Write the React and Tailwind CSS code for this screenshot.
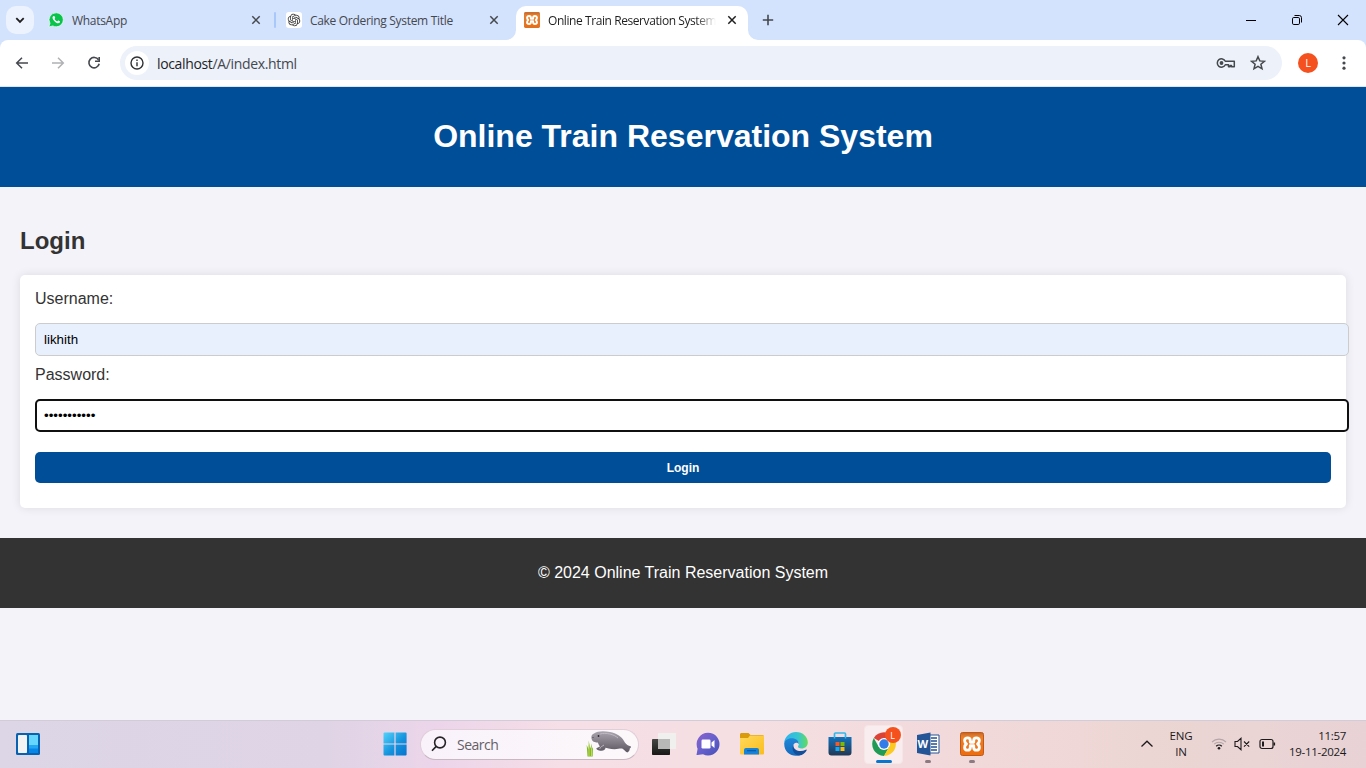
import React from "react";

const Close = ({ className = "" }) => (
  <svg className={"shrink-0 " + className} width="16" height="16" viewBox="0 0 16 16" fill="none" stroke="currentColor" strokeWidth="1.5">
    <path d="M4.300 4.300l7.400 7.400M11.700 4.300l-7.400 7.400" />
  </svg>
);

const Xampp = ({ size, id }) => (
  <svg className="shrink-0" width={size} height={size} viewBox="0 0 24 24">
    <defs>
      <linearGradient id={id} x1="0" y1="0" x2="0" y2="1">
        <stop offset="0" stopColor="#c8601c" />
        <stop offset="0.12" stopColor="#d97831" />
        <stop offset="0.2" stopColor="#ee7e24" />
        <stop offset="1" stopColor="#ee6c0c" />
      </linearGradient>
    </defs>
    <rect x="0.5" y="0.500" width="23" height="23" rx="2" fill={`url(#${id})`} stroke="#bd5a1b" />
    <path d="M10.300 10.200V8.600c0-1.700-1-2.700-2.700-2.700S4.600 7 4.600 8.600c0 1.500.8 2.600 1.800 3.400-1 .8-1.800 1.900-1.800 3.400 0 1.600 1.300 2.700 3 2.700s2.700-1 2.700-2.700v-1.600h3.400v1.600c0 1.700 1 2.700 2.700 2.700s3-1.100 3-2.700c0-1.500-.8-2.600-1.800-3.400 1-.8 1.800-1.900 1.800-3.400 0-1.600-1.300-2.700-3-2.700s-2.700 1-2.700 2.700v1.600z" fill="none" stroke="#fff" strokeWidth="2.900" strokeLinejoin="round" />
  </svg>
);

const WhatsApp = () => (
  <svg className="shrink-0" width="16" height="16" viewBox="0 0 16 16">
    <path d="M8.300.8a7 7 0 0 1 0 14 7.200 7.200 0 0 1-3.500-.9L.8 15l1.200-3.700A7 7 0 0 1 8.300.8z" fill="#08c44b" stroke="#f4fff8" strokeWidth=".7" />
    <path d="M5.300 4.200c.4-.4 1-.4 1.200 0l.7 1.500c.1.3-.5.9-.6 1.200.5 1.100 1.500 1.900 2.600 2.400.4-.2.8-1 1.200-.9l1.500.8c.5.5-.2 1.600-.9 1.900-1 .4-2.600-.2-3.800-1.200C5.700 8.700 4.400 7 4.500 5.600c0-.6.4-1.100.8-1.400z" fill="#fff" />
  </svg>
);

const OpenAI = () => (
  <svg className="shrink-0" width="16" height="16" viewBox="0 0 24 24">
    <rect width="24" height="24" rx="4" fill="#fff" />
    <path transform="translate(2.600 2.600) scale(.783)" fill="#333" d="M22.28 9.82a5.98 5.98 0 0 0-.52-4.91 6.05 6.05 0 0 0-6.51-2.9A6.07 6.07 0 0 0 4.98 4.18a5.98 5.98 0 0 0-4 2.9 6.05 6.05 0 0 0 .74 7.1 5.98 5.98 0 0 0 .51 4.91 6.05 6.05 0 0 0 6.51 2.9A5.98 5.98 0 0 0 13.26 24a6.06 6.06 0 0 0 5.77-4.21 5.99 5.99 0 0 0 4-2.9 6.06 6.06 0 0 0-.75-7.07zm-9.02 12.61a4.48 4.48 0 0 1-2.88-1.04l.14-.08 4.78-2.76a.8.8 0 0 0 .39-.68v-6.74l2.02 1.17a.07.07 0 0 1 .04.05v5.58a4.5 4.5 0 0 1-4.49 4.5zM3.6 18.3a4.47 4.47 0 0 1-.54-3.01l.14.09 4.78 2.76a.77.77 0 0 0 .78 0l5.84-3.37v2.33a.08.08 0 0 1-.03.06L9.74 19.95a4.5 4.5 0 0 1-6.14-1.65zM2.34 7.9a4.49 4.49 0 0 1 2.37-1.98V11.6a.77.77 0 0 0 .39.68l5.81 3.35-2.02 1.17a.08.08 0 0 1-.07 0L4 14A4.5 4.5 0 0 1 2.34 7.87zm16.6 3.86-5.84-3.39L15.12 7.2a.08.08 0 0 1 .07 0l4.83 2.79a4.49 4.49 0 0 1-.68 8.1v-5.67a.79.79 0 0 0-.4-.66zm2-3.02-.14-.09-4.77-2.78a.78.78 0 0 0-.79 0L9.41 9.23V6.9a.07.07 0 0 1 .03-.06l4.83-2.79a4.5 4.5 0 0 1 6.68 4.66zM8.31 12.86l-2.02-1.16a.08.08 0 0 1-.04-.06V6.07a4.5 4.5 0 0 1 7.38-3.45l-.14.08L8.7 5.46a.8.8 0 0 0-.39.68zm1.1-2.37L12 9l2.6 1.5v3L12 15l-2.6-1.5z" />
  </svg>
);

function TabStrip() {
  return (
    <div className="flex h-10 bg-[#d3e2fd] text-[#45484d]">
      <div className="flex flex-1 items-center pl-1.5">
        <button className="flex h-7 w-7 items-center justify-center rounded-[10px] bg-[#ecf2fe] text-[#1f1f1f]">
          <svg width="10" height="10" viewBox="0 0 10 10" fill="none" stroke="currentColor" strokeWidth="1.800"><path d="M1.300 3.200L5 6.900l3.700-3.700" /></svg>
        </button>
        <div className="ml-3.5 flex w-[216px] items-center">
          <WhatsApp />
          <span className="ml-2 flex-1 pt-0.5 text-[12px] tracking-[-0.3px]">WhatsApp</span>
          <Close />
        </div>
        <div className="ml-2.5 h-4 w-0.5 rounded bg-[#a8c7fa]" />
        <div className="ml-2.5 flex w-[216px] items-center">
          <OpenAI />
          <span className="ml-2 flex-1 whitespace-nowrap pt-0.5 text-[12px] tracking-[-0.31px]">Cake Ordering System Title</span>
          <Close />
        </div>
        <div className="relative ml-3.5 mt-1.5 flex h-[34px] w-[232px] items-center rounded-t-[10px] bg-white px-2 pb-1.5 text-[#1f1f1f]">
          <svg className="absolute bottom-0 -left-2.5" width="10" height="10"><path d="M10 0v10H0A10 10 0 0 0 10 0z" fill="#fff" /></svg>
          <svg className="absolute bottom-0 -right-2.5" width="10" height="10"><path d="M0 0v10h10A10 10 0 0 1 0 0z" fill="#fff" /></svg>
          <Xampp size={16} id="xa" />
          <span className="ml-2 w-[168px] overflow-hidden whitespace-nowrap pt-0.5 text-[12px] tracking-[-0.42px] [mask-image:linear-gradient(to_right,black_88%,transparent)]">Online Train Reservation System</span>
          <Close className="ml-2" />
        </div>
        <svg className="ml-3" width="16" height="16" viewBox="0 0 16 16" stroke="#45484d" strokeWidth="1.600"><path d="M8 2.800v10.400M2.800 8h10.400" /></svg>
      </div>
      <div className="flex items-center text-black">
        <div className="flex w-[46px] justify-center"><svg width="12" height="12"><path d="M1 6.500h10" stroke="currentColor" /></svg></div>
        <div className="flex w-[46px] justify-center">
          <svg width="12" height="12" viewBox="0 0 12 12" fill="none" stroke="currentColor"><rect x="1.500" y="3.500" width="7" height="7" rx="1.300" /><path d="M3.500 1.500h4.800a2.200 2.200 0 0 1 2.200 2.200v4.800" /></svg>
        </div>
        <div className="flex w-[46px] justify-center"><svg width="12" height="12" stroke="currentColor" strokeWidth="1.100"><path d="M1 1l10 10M11 1L1 11" /></svg></div>
      </div>
    </div>
  );
}

function Toolbar() {
  return (
    <div className="bg-[#d3e2fd]">
      <div className="flex h-[47px] items-center rounded-t-lg border-b border-[#dfe5ee] bg-white pl-3.5 text-[#45484d]">
        <svg width="16" height="16" viewBox="0 0 16 16" fill="none" stroke="currentColor" strokeWidth="1.500"><path d="M14 8H3M8 2.700L2.700 8 8 13.300" /></svg>
        <svg className="ml-5 text-[#b0b1b3]" width="16" height="16" viewBox="0 0 16 16" fill="none" stroke="currentColor" strokeWidth="1.500"><path d="M2 8h11M8 2.700L13.300 8 8 13.300" /></svg>
        <svg className="ml-5" width="16" height="16" viewBox="0 0 16 16" fill="none" stroke="currentColor" strokeWidth="1.600"><path d="M12.500 4.800A5.200 5.200 0 1 0 13.200 8.800" /><path d="M13.200 2v4.200H9" /></svg>
        <div className="ml-[18px] flex h-[34px] w-[1162px] items-center rounded-full bg-[#ecf1fa] pl-[5px] pr-4">
          <div className="flex h-6 w-6 items-center justify-center rounded-full bg-white">
            <svg width="14" height="14" viewBox="0 0 14 14" fill="none" stroke="#303134" strokeWidth="1.400"><circle cx="7" cy="7" r="6" /><path d="M7 6.200v4M7 3.500v1.500" /></svg>
          </div>
          <span className="ml-2 flex-1 text-[14px] tracking-[-0.35px]"><span className="text-[#1f1f1f]">localhost</span>/A/index.html</span>
          <svg width="20" height="16" viewBox="0 0 20 16" fill="none" stroke="currentColor" strokeWidth="1.500"><path d="M9.300 6.200a4.200 4.200 0 1 0 0 3.600h3.200v2h1.600v-1.400h1.400v1.400h2.800V6.200z" strokeLinejoin="round" /><circle cx="5.500" cy="8" r="1.900" fill="currentColor" stroke="none" /></svg>
          <svg className="ml-3.5" width="16" height="16" viewBox="0 0 16 16" fill="none" stroke="currentColor" strokeWidth="1.500"><path d="M8 1.700l1.800 4.200 4.600.4-3.500 3 1.100 4.500L8 11.400l-4 2.400 1.100-4.500-3.500-3 4.600-.4z" /></svg>
        </div>
        <div className="ml-4 flex h-5 w-5 items-center justify-center rounded-full bg-[#f4511e] text-[11px] text-white">L</div>
        <svg className="ml-[18px]" width="16" height="16" fill="currentColor"><circle cx="8" cy="2.800" r="1.600" /><circle cx="8" cy="8" r="1.600" /><circle cx="8" cy="13.200" r="1.600" /></svg>
      </div>
    </div>
  );
}

function Page() {
  return (
    <div className="flex-1 bg-[#f4f3f9] font-['Liberation_Sans',Arial,sans-serif] text-[#333]">
      <header className="flex h-[100px] items-center justify-center bg-[#004e98] pb-0.5">
        <h1 className="text-[32px] leading-9 font-bold text-white">Online Train Reservation System</h1>
      </header>
      <main className="px-5 pt-10 pb-[30px]">
        <h2 className="mb-5 text-[24px] leading-7 font-bold">Login</h2>
        <form className="flex h-[233px] flex-col rounded-[5px] bg-white px-[15px] pt-[15px] shadow-[0_0_10px_rgba(0,0,0,0.1)]">
          <label className="h-[18px] text-[16px] leading-[18px]">Username:</label>
          <input readOnly defaultValue="likhith" className="mt-[15px] h-[33px] w-[1314px] rounded-[5px] border border-[#ccc] bg-[#e8f0fe] px-2 text-[13.333px] text-black outline-none" />
          <label className="mt-2.5 h-[18px] text-[16px] leading-[18px]">Password:</label>
          <input readOnly type="password" defaultValue="password123" className="mt-[15px] h-[33px] w-[1314px] rounded-[5px] border-2 border-[#101010] bg-white px-[7px] text-[13.333px] text-black outline-none" />
          <button type="button" className="mt-5 h-[31px] w-full rounded-[5px] bg-[#004e98] text-[12px] font-bold text-white">Login</button>
        </form>
      </main>
      <footer className="flex h-[70px] items-center justify-center bg-[#333] text-[16px] leading-[18px] text-white">© 2024 Online Train Reservation System</footer>
    </div>
  );
}

const Slot = ({ children }) => <div className="relative flex h-12 w-11 shrink-0 items-center justify-center">{children}</div>;

const Manatee = () => (
  <svg width="48" height="28" viewBox="0 0 48 28">
    <defs><linearGradient id="man" x1="0" y1="0" x2="0" y2="1"><stop stopColor="#aaa5ae" /><stop offset=".55" stopColor="#807a85" /><stop offset="1" stopColor="#5b5560" /></linearGradient></defs>
    <path d="M1.500 26.500L.7 15l2 4.500V10.500l1.500 8 1.700-5-.3 6 1.400-2.500-.3 9.500z" fill="#83b82c" />
    <path d="M3 26V15M5.500 26v-7" stroke="#c5dd5c" strokeWidth=".9" />
    <path d="M5.500 8.500C5 6 6 4.200 8 3.500 11.500.8 18 .7 24 2c6.500 1.200 11.500 4.500 14 9 1 2.200 2.700 3.800 5 4.800 2.500.4 2.800 1.500.8 2.700 0 1.800-1 3.400-2.500 4-2-.8-2.700-2.500-4.700-3.800-1.800-.6-4.600.5-8 .5-4.600 0-8-1.200-9.200-1.400.4 1.500-1.500 3-4 3-2.800.1-5.300-1.300-5-2.500l3.500-1.800c-1-1.400-1.500-2.800-2.100-4.100C9.700 12.500 6 12 5.500 8.500z" fill="url(#man)" />
    <path d="M18 15c-2 1.300-3.500 1.800-4.300 3.900M14 4c6-1.700 14 .3 18 4" stroke="#c2bdc5" strokeWidth=".9" fill="none" />
    <circle cx="12.500" cy="6" r=".9" fill="#29242d" /><circle cx="7" cy="7.500" r=".6" fill="#433c47" />
  </svg>
);

function Taskbar() {
  return (
    <div className="flex h-12 items-center border-t border-[#d3cbd8] bg-[linear-gradient(90deg,#dcd6e7_0%,#dfd4e5_24%,#ecd5ea_32%,#f6dfe6_41%,#f6dfe2_55%,#f1d9da_72%,#ecd6d3_84%,#e8d2d5_100%)] pb-px pl-1.5 text-[#1c1a1c]">
      <Slot>
        <svg width="24" height="22" viewBox="0 0 24 22"><rect width="24" height="22" rx="1.500" fill="#0862b2" /><rect x="2" y="2" width="9" height="18" rx=".8" fill="#f3f3f3" /><rect x="13" y="2" width="9" height="10.500" fill="#67d6ff" /><path d="M13 12h9v4h-9z" fill="#24a7f2" /><path d="M13 15.500h9V20h-9z" fill="#0786e9" /></svg>
      </Slot>
      <div className="w-[323px] shrink-0" />
      <Slot>
        <svg width="24" height="24" viewBox="0 0 24 24"><defs><linearGradient id="win" x1="0" y1="0" x2="1" y2="1"><stop stopColor="#54d3fb" /><stop offset=".55" stopColor="#1593dd" /><stop offset="1" stopColor="#0673ce" /></linearGradient></defs><path d="M1.500.5h9.900v11H.5v-10a1 1 0 0 1 1-1zm11.100 0h10a1 1 0 0 1 1 1v10h-11zM.5 12.600h10.900v11H1.500a1 1 0 0 1-1-1zm12.100 0h11v10a1 1 0 0 1-1 1h-10z" fill="url(#win)" /></svg>
      </Slot>
      <div className="ml-[3px] flex h-[31px] w-[219px] shrink-0 items-center rounded-full border border-[#e1ced9] border-b-[#c8b8c1] bg-[linear-gradient(90deg,#f9f2fb,#fcf8fa)] pl-2.5 pr-1">
        <svg width="16" height="16" viewBox="0 0 16 16" fill="none" stroke="#252325" strokeWidth="1.600"><circle cx="9" cy="6.500" r="5.400" /><path d="M5.200 10.400L1 14.800" /></svg>
        <span className="ml-[10px] flex-1 text-[14px] tracking-[-0.5px] text-[#655f66]">Search</span>
        <Manatee />
      </div>
      <div className="ml-[2.500px] flex shrink-0">
        <Slot>
          <svg width="24" height="22" viewBox="0 0 24 22"><defs><linearGradient id="tv" x1="0" y1="0" x2="0" y2="1"><stop stopColor="#444743" /><stop offset="1" stopColor="#171817" /></linearGradient></defs><rect y="6" width="18" height="16" rx=".8" fill="url(#tv)" /><rect x="6" width="18" height="16" rx=".8" fill="#f0f0ef" /><path d="M6 6h12v10H6z" fill="#b8b9b6" /></svg>
        </Slot>
        <Slot>
          <svg width="24" height="24" viewBox="0 0 24 24"><defs><linearGradient id="meet" x1="0" y1="0" x2="1" y2="1"><stop stopColor="#8b62cd" /><stop offset=".5" stopColor="#6760cc" /><stop offset="1" stopColor="#4650b8" /></linearGradient></defs><path d="M12 .7A11.400 11.400 0 1 1 7 22.300L1.400 23c-1 .1-1-.6-.7-1.300l.9-5A11.400 11.400 0 0 1 12 .7z" fill="url(#meet)" /><rect x="5.500" y="7.500" width="9" height="9" rx="1.200" fill="#fff" /><path d="M15.500 10.500L18.500 8v8l-3-2.500z" fill="#fff" /></svg>
        </Slot>
        <Slot>
          <svg width="24" height="24" viewBox="0 0 24 24"><defs><linearGradient id="fold" x1="0" y1="0" x2="1" y2="1"><stop stopColor="#ffd95c" /><stop offset="1" stopColor="#fbbd1d" /></linearGradient></defs><path d="M0 2.500C0 1.700.6 1 1.500 1h7L10.500 3H22.500a1.500 1.500 0 0 1 1.500 1.500V8H0z" fill="#d99a0c" /><path d="M0 6h8l2-2.500h14V21.500a1 1 0 0 1-1 1H1a1 1 0 0 1-1-1z" fill="url(#fold)" /><path d="M4 22.500v-4.500a2 2 0 0 1 2-2h11a2 2 0 0 1 2 2v4.500z" fill="#1682d8" /><path d="M7 18.700h9" stroke="#0859a5" strokeWidth="1.200" /></svg>
        </Slot>
        <Slot>
          <svg width="24" height="24" viewBox="0 0 24 24"><defs><linearGradient id="ea"><stop stopColor="#2fb2ee" /><stop offset=".6" stopColor="#38c7cf" /><stop offset="1" stopColor="#62dc59" /></linearGradient><linearGradient id="eb" x1="0" y1="0" x2="0" y2="1"><stop stopColor="#2087d8" /><stop offset="1" stopColor="#1269bd" /></linearGradient></defs><path d="M.2 10.500C1 4.300 6 .1 12 .1c7 0 11.800 5 11.800 10.300 0 3.700-2.800 6-6.200 6-2.400 0-4.200-.8-3.500-2.200 2.200-3.300-.5-6.500-4-6.500-5 0-7.200 1-9.900 2.800z" fill="url(#ea)" /><path d="M.2 11.300C1.400 6.700 6.500 5.700 10 6.500c3 .6 5.200 3.200 4.700 5.500-1.800-2.400-5.500-1.400-5.500 2.400 0 4.500 3.800 8 8.300 8.200C10.500 26 0 22.500.2 11.300z" fill="url(#eb)" /><path d="M9.200 13C7.300 17.500 10 23 15.300 23.600c3.500-.8 5.900-2.800 7.300-5.200.3-.7-.2-1-.8-.6-5.400 2.700-12.300 1-12.600-4.800z" fill="#104f9c" /></svg>
        </Slot>
        <Slot>
          <svg width="24" height="24" viewBox="0 0 24 24"><defs><linearGradient id="store" x1="0" y1="0" x2="0" y2="1"><stop stopColor="#1272bc" /><stop offset="1" stopColor="#213754" /></linearGradient></defs><path d="M6.500 7V2a1 1 0 0 1 1-1h9a1 1 0 0 1 1 1v5" fill="none" stroke="#32b8ed" strokeWidth="1.700" /><path d="M.5 5h23v15.500a3 3 0 0 1-3 3h-17a3 3 0 0 1-3-3z" fill="url(#store)" /><path d="M7.500 10h4v4h-4z" fill="#f15a29" /><path d="M12.500 10h4v4h-4z" fill="#7fba00" /><path d="M7.500 15h4v4h-4z" fill="#17a8ef" /><path d="M12.500 15h4v4h-4z" fill="#ffba08" /><path d="M6.500 5v1.500M17.500 5v1.500" stroke="#32b8ed" strokeWidth="1.500" /></svg>
        </Slot>
        <Slot>
          <div className="flex h-[39px] w-[39px] items-center justify-center rounded border border-[#f5e6e8] bg-[#f9edef]">
            <svg width="24" height="24" viewBox="0 0 24 24"><path d="M12 12L1.800 6A12 12 0 0 1 22.300 6z" fill="#dc4337" /><path d="M1.800 6A12 12 0 0 0 12 24l5.200-9L6.800 15z" fill="#209b55" /><path d="M22.300 6A12 12 0 0 1 12 24l5.200-9L12 6z" fill="#fbc91f" /><circle cx="12" cy="12" r="6" fill="#fff" /><circle cx="12" cy="12" r="4.700" fill="#347de8" /></svg>
          </div>
          <span className="absolute top-[7px] right-[5px] flex h-4 w-4 items-center justify-center rounded-full bg-[#f4511e] text-[9px] leading-none text-white">L</span>
          <span className="absolute bottom-[5px] h-[3px] w-4 rounded-full bg-[#0875ce]" />
        </Slot>
        <Slot>
          <svg width="24" height="24" viewBox="0 0 24 24"><path d="M11 3h12v18H11z" fill="#fff" stroke="#245293" /><path d="M15 6h6M15 9h6M15 12h6M15 15h6M15 18h6" stroke="#245293" strokeWidth="1.400" /><path d="M1 3L14.500.5v23L1 21z" fill="#245596" /></svg>
          <span className="absolute left-[12px] top-[17px] text-[11px] font-bold leading-[14px] text-white">W</span>
          <span className="absolute bottom-[5px] h-[3px] w-1.5 rounded-full bg-[#8b7b80]" />
        </Slot>
        <Slot><Xampp size={24} id="xb" /><span className="absolute bottom-[5px] h-[3px] w-1.5 rounded-full bg-[#8b7b80]" /></Slot>
      </div>
      <div className="ml-auto flex shrink-0 items-center pr-5 text-[12px] leading-4">
        <svg width="12" height="8" viewBox="0 0 12 8" fill="none" stroke="currentColor" strokeWidth="1.300"><path d="M.5 6.500L6 1.200l5.500 5.300" /></svg>
        <div className="ml-4 w-6 text-center text-[11.500px] tracking-[-0.2px]">ENG<br />IN</div>
        <svg className="ml-[18px]" width="16" height="14" viewBox="0 0 16 14" fill="none" stroke="currentColor"><path d="M1 5a10 10 0 0 1 14 0M3.200 7.200a6.800 6.800 0 0 1 9.600 0" stroke="#b4a6a9" strokeWidth="1.100" /><path d="M5.200 9.200a4 4 0 0 1 5.600 0" strokeWidth="1.300" /><circle cx="8" cy="11.300" r="1.300" fill="currentColor" stroke="none" /></svg>
        <svg className="ml-[7px]" width="17" height="14" viewBox="0 0 17 14" fill="none" stroke="currentColor" strokeWidth="1.100"><path d="M1 4.500h2.500L7 1.300v11.400L3.500 9.500H1zM10 4.500l5.200 5.200M15.200 4.500L10 9.700" /></svg>
        <svg className="ml-2" width="17" height="12" viewBox="0 0 17 12" fill="none" stroke="currentColor" strokeWidth="1.200"><rect x="1" y="1.500" width="13" height="9" rx="2" /><path d="M3 3.500h2v5H3z" fill="currentColor" stroke="none" /><path d="M15.300 4.500v3" strokeWidth="1.600" /></svg>
        <div className="ml-2.5 w-[60px] whitespace-nowrap text-right text-[11.500px] tracking-[-0.3px]">11:57<br />19-11-2024</div>
      </div>
    </div>
  );
}

export default function App() {
  return (
    <div className="flex h-[768px] w-[1366px] flex-col overflow-hidden font-['Open_Sans','Noto_Sans',sans-serif]">
      <TabStrip />
      <Toolbar />
      <Page />
      <Taskbar />
    </div>
  );
}
